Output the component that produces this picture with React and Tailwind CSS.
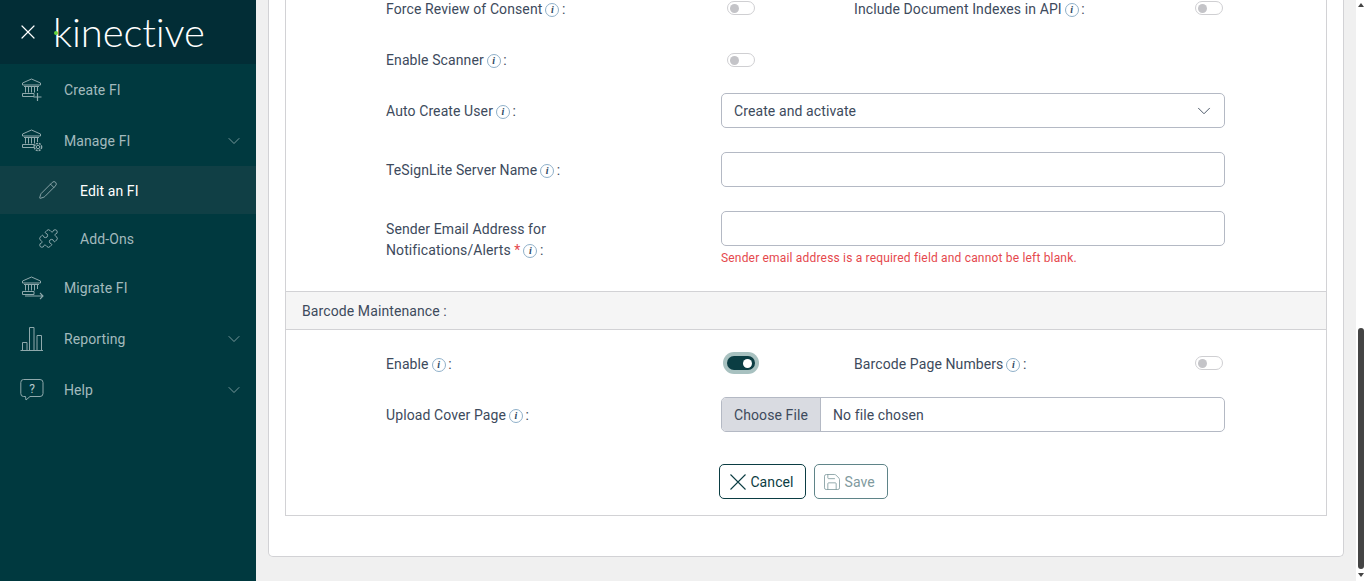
import React from 'react';
import { X, ChevronDown, Pencil, Puzzle, Save } from 'lucide-react';

function BankIcon({ children }) {
    return (
        <svg width="26" height="26" viewBox="0 0 26 26" fill="none" stroke="#8fa9ac" strokeWidth="1" className="shrink-0">
            <path d="M2.5 6 L11.5 2 L20.5 6 V8 H2.5 Z" />
            <path d="M4 9.5 H19 M5.5 10 V15.5 M8.5 10 V15.5 M11.5 10 V15.5 M14.5 10 V15.5 M17.5 10 V14" />
            <path d="M2.5 16.5 H14 V19.5 H2.5 Z" />
            {children}
        </svg>
    );
}

function PlusBank() {
    return <BankIcon><path d="M17.5 16 V24 M13.5 20 H21.5" strokeWidth="1.2" /></BankIcon>;
}

function GearBank() {
    return (
        <BankIcon>
            <circle cx="18" cy="19" r="1.7" />
            <circle cx="18" cy="19" r="3.6" strokeWidth="1.5" strokeDasharray="2 0.9" />
        </BankIcon>
    );
}

function ArrowBank() {
    return <BankIcon><path d="M5 21 H23 M20 18 L23 21 L20 24" strokeWidth="1.1" /></BankIcon>;
}

function BarsIcon() {
    return (
        <svg width="26" height="26" viewBox="0 0 26 26" fill="none" stroke="#8fa9ac" strokeWidth="1" className="shrink-0">
            <path d="M0.5 24.5 H23 M2.5 24 V16.5 H7 V24 M9.5 24 V1.5 H14 V24 M17 24 V9.5 H21.5 V24" />
        </svg>
    );
}

function HelpIcon() {
    return (
        <svg width="26" height="26" viewBox="0 0 26 26" fill="none" stroke="#8fa9ac" strokeWidth="1" className="shrink-0">
            <path d="M3.5 2.5 H20 Q23 2.5 23 5.5 V16.5 Q23 19.5 20 19.5 H10 L6 23 L5.5 19.5 H3.5 Q0.8 19.5 0.8 16.5 V5.5 Q0.8 2.5 3.5 2.5 Z" />
            <text x="12" y="15.5" textAnchor="middle" fontSize="12" fontFamily="Roboto, sans-serif" fill="#b7cacc" stroke="none">?</text>
        </svg>
    );
}

function NavItem({ icon, label, chevron, sub, active }) {
    const rowClass = active
        ? 'h-[48px] bg-[#103f45] text-white pl-[38px]'
        : sub
            ? 'h-[48px] text-[#a3babd] pl-[38px]'
            : 'h-[51px] text-[#a3babd] pl-[20px]';
    return (
        <div className={`flex items-center pr-[12px] ${rowClass}`}>
            <div className={`flex shrink-0 items-center ${sub || active ? 'w-[42px]' : 'w-[44px]'}`}>{icon}</div>
            <span className="flex-1 pt-[2px] text-[14px] tracking-[0.1px]">{label}</span>
            {chevron && <ChevronDown size={20} strokeWidth={0.9} color="#9fb6b9" />}
        </div>
    );
}

function Sidebar() {
    return (
        <aside className="flex w-[256px] shrink-0 flex-col bg-[#00393f]">
            <div className="flex h-[64px] items-center bg-[#022d36] pl-[16px]">
                <X size={24} strokeWidth={1.2} color="#ffffff" />
                <div className="relative ml-[13px] text-[40px] leading-none font-light tracking-[-0.1px] text-white font-['Lato',sans-serif]">
                    kinective
                    <span className="absolute top-[19px] left-[1px] h-[4px] w-[4px] rounded-full bg-[#66d33f]"></span>
                </div>
            </div>
            <NavItem icon={<PlusBank />} label="Create FI" />
            <NavItem icon={<GearBank />} label="Manage FI" chevron />
            <NavItem icon={<Pencil size={20} strokeWidth={1} color="#9fb6b9" />} label="Edit an FI" active />
            <NavItem icon={<Puzzle size={21} strokeWidth={1} color="#9fb6b9" />} label="Add-Ons" sub />
            <NavItem icon={<ArrowBank />} label="Migrate FI" />
            <NavItem icon={<BarsIcon />} label="Reporting" chevron />
            <NavItem icon={<HelpIcon />} label="Help" chevron />
        </aside>
    );
}

function Info() {
    return (
        <span className="ml-[3px] -mr-[1px] inline-flex h-[14px] w-[14px] -translate-y-[1px] items-center justify-center rounded-full border border-[#8fb0c9] text-[10px] leading-none font-bold italic text-[#2f4a63] font-['Liberation_Serif',serif]">
            i
        </span>
    );
}

function Label({ text, width = 'w-[335px]', className = '' }) {
    return (
        <div className={`shrink-0 text-[14px] leading-[21px] tracking-[0.1px] text-[#3d4a5c] ${width} ${className}`}>
            {text}
            <Info />
            <span> :</span>
        </div>
    );
}

function Toggle({ on }) {
    if (on) {
        return (
            <div className="mb-[2px] flex h-[22px] w-[36px] items-center justify-center rounded-full bg-[#a8c1c0]">
                <div className="flex h-[14px] w-[28px] items-center justify-end rounded-full bg-[#0b3d43] pr-[3px]">
                    <div className="h-[9px] w-[9px] rounded-full bg-white"></div>
                </div>
            </div>
        );
    }
    return (
        <div className="flex h-[14px] w-[28px] items-center rounded-full border border-[#cfcfd2] bg-white pl-[2px]">
            <div className="h-[9px] w-[9px] rounded-full bg-[#c4c4c8]"></div>
        </div>
    );
}

function TextBox() {
    return <div className="h-[35px] w-[504px] rounded-[5px] border border-[#b4b9c4] bg-white"></div>;
}

function ToggleRow({ label, toggle, label2, className, labelClass }) {
    return (
        <div className={`flex items-center pl-[100px] ${className}`}>
            <Label text={label} width="w-[341px]" className={labelClass} />
            <div className="w-[127px] shrink-0"><Toggle on={toggle} /></div>
            {label2 && <Label text={label2} width="w-[341px]" className={labelClass} />}
            {label2 && <Toggle />}
        </div>
    );
}

function MainForm() {
    return (
        <main className="flex min-w-0 flex-1 flex-col bg-[#f0f0f0] pl-[12px] pr-[12px]">
            <div className="rounded-b-[5px] border-x border-b border-[#d2d2d5] bg-white px-[16px] pb-[40px]">
                <div className="border-x border-b border-[#d2d2d5] bg-white">
                    <ToggleRow className="h-[16px]" labelClass="pt-[2px]" label="Force Review of Consent" label2="Include Document Indexes in API" />
                    <ToggleRow className="mt-[36px] h-[16px]" label="Enable Scanner" />

                    <div className="mt-[25px] flex items-center pl-[100px]">
                        <Label text="Auto Create User" className="pt-[2px]" />
                        <div className="flex h-[35px] w-[504px] items-center justify-between rounded-[5px] border border-[#b4b9c4] bg-white pl-[12px] pr-[9px] text-[14px] tracking-[0.1px] text-[#3d4a5c]">
                            <span className="pt-[2px]">Create and activate</span>
                            <ChevronDown size={22} strokeWidth={1} color="#3d4a5c" />
                        </div>
                    </div>

                    <div className="mt-[24px] flex items-center pl-[100px]">
                        <Label text="TeSignLite Server Name" className="pt-[2px]" />
                        <TextBox />
                    </div>

                    <div className="mt-[24px] flex pl-[100px]">
                        <div className="w-[335px] shrink-0 pt-[8px] text-[14px] leading-[21px] tracking-[0.1px] text-[#3d4a5c]">
                            Sender Email Address for
                            <br />
                            Notifications/Alerts
                            <span className="text-[#e5484d]"> *</span>
                            <Info />
                            <span> :</span>
                        </div>
                        <div>
                            <TextBox />
                            <div className="mt-[5px] text-[12px] leading-[14px] tracking-[0.18px] text-[#e5484d]">Sender email address is a required field and cannot be left blank.</div>
                        </div>
                    </div>

                    <div className="mt-[26px] flex h-[39px] items-center border-y border-[#d2d2d5] bg-[#f5f5f5] pl-[16px] pt-[2px] text-[14px] tracking-[0.1px] text-[#3d4a5c]">
                        Barcode Maintenance :
                    </div>

                    <div className="mt-[24px] flex h-[20px] items-center pl-[100px]">
                        <Label text="Enable" width="w-[337px]" />
                        <div className="w-[131px] shrink-0"><Toggle on /></div>
                        <Label text="Barcode Page Numbers" width="w-[341px]" />
                        <div className="mb-[2px]"><Toggle /></div>
                    </div>

                    <div className="mt-[23px] flex items-center pl-[100px]">
                        <Label text="Upload Cover Page" className="pt-[2px]" />
                        <div className="flex h-[35px] w-[504px] items-center overflow-hidden rounded-[5px] border border-[#b4b9c4] bg-white text-[14px] tracking-[0.1px] text-[#3d4a5c]">
                            <div className="flex h-full w-[99px] items-center justify-center border-r border-[#b4b9c4] bg-[#d9dbe1] pt-[2px]">Choose File</div>
                            <span className="pl-[12px] pt-[2px]">No file chosen</span>
                        </div>
                    </div>

                    <div className="mt-[32px] mb-[16px] flex justify-center gap-[8px] pr-[6px]">
                        <button className="flex h-[35px] w-[87px] items-center justify-center gap-[4px] rounded-[5px] border border-[#0b3d43] text-[14px] tracking-[0.1px] text-[#0b3d43]">
                            <svg width="16" height="16" viewBox="0 0 16 16" fill="none" stroke="currentColor" strokeWidth="1.1">
                                <path d="M0.5 0.5 L15.5 15.5 M15.5 0.5 L0.5 15.5" />
                            </svg>
                            <span className="pt-[2px]">Cancel</span>
                        </button>
                        <button className="flex h-[35px] w-[74px] items-center gap-[3px] rounded-[5px] border border-[#5f8488] pl-[7px] text-[14px] tracking-[0.1px] text-[#7f9a9e]">
                            <Save size={20} strokeWidth={1} />
                            <span className="pt-[2px]">Save</span>
                        </button>
                    </div>
                </div>
            </div>
        </main>
    );
}

function Scrollbar() {
    return (
        <div className="flex w-[10px] shrink-0 flex-col items-center bg-white pt-[3px]">
            <div className="h-0 w-0 border-x-[3px] border-b-[4px] border-x-transparent border-b-[#444444]"></div>
            <div className="mt-[321px] h-[241px] w-[6px] rounded-full bg-[#444444]"></div>
            <div className="mt-[4px] h-0 w-0 border-x-[3px] border-t-[4px] border-x-transparent border-t-[#444444]"></div>
        </div>
    );
}

export default function App() {
    return (
        <div className="flex h-[581px] w-[1366px] overflow-hidden font-['Roboto',sans-serif]">
            <Sidebar />
            <MainForm />
            <Scrollbar />
        </div>
    );
}
